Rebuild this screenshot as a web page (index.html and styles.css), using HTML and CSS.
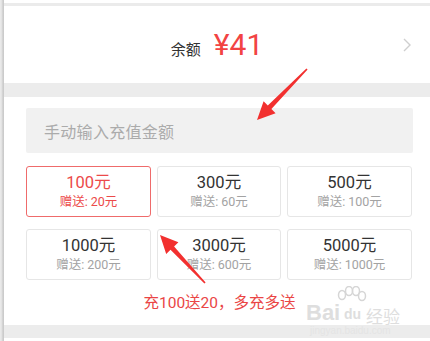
FILE: index.html
```html
<!DOCTYPE html>
<html>
<head>
<meta charset="utf-8">
<link rel="stylesheet" href="styles.css">
</head>
<body>
<div class="frame">
  <div class="edge"></div>
  <div class="main">
    <div class="topgap"></div>
    <div class="topline"></div>
    <div class="header">
      <span class="label">余额</span>
      <span class="amount">¥41</span>
      <svg class="chev" width="8" height="14" viewBox="0 0 8 14"><path d="M1 1 L7 7 L1 13" fill="none" stroke="#cfcfcf" stroke-width="1.4"/></svg>
    </div>
    <div class="band"></div>
    <div class="content">
      <div class="input">手动输入充值金额</div>
      <div class="grid">
        <div class="opt sel"><div class="big">100元</div><div class="small">赠送: 20元</div></div>
        <div class="opt"><div class="big">300元</div><div class="small">赠送: 60元</div></div>
        <div class="opt"><div class="big">500元</div><div class="small">赠送: 100元</div></div>
        <div class="opt"><div class="big">1000元</div><div class="small">赠送: 200元</div></div>
        <div class="opt"><div class="big">3000元</div><div class="small">赠送: 600元</div></div>
        <div class="opt"><div class="big">5000元</div><div class="small">赠送: 1000元</div></div>
      </div>
      <div class="promo">充100送20，多充多送</div>
    </div>
    <div class="band bottom"></div>
  </div>
</div>
<div class="wm">
  <svg class="paw" width="34" height="26" viewBox="0 0 34 26">
    <g fill="none" stroke="#d6d6d6" stroke-width="1.5">
      <ellipse cx="8" cy="9" rx="3.5" ry="4.5"/>
      <ellipse cx="15" cy="5" rx="3.5" ry="4.5"/>
      <ellipse cx="22" cy="5" rx="3.5" ry="4.5"/>
      <ellipse cx="28" cy="10" rx="3.5" ry="4.5"/>
    </g>
  </svg>
  <span class="wm-bai">Bai</span><span class="wm-du">du</span><span class="wm-jy">经验</span>
  <div class="wm-url">jingyan.baidu.com</div>
</div>
<svg class="notes" width="430" height="341" viewBox="0 0 430 341">
  <polygon fill="#f2302f" points="307.6,69.6 271.4,109 275.6,113.2 257,120 263.6,101.2 267.8,105.5 306.4,68.4"/>
  <polygon fill="#f2302f" points="205.6,282.4 174.1,246.4 178.4,242.2 160,235 166.2,254 170.5,249.8 204.4,283.6"/>
</svg>
</body>
</html>
```
FILE: styles.css
```css
html, body {
  margin: 0;
  padding: 0;
  background: #fff;
}
body {
  width: 430px;
  height: 341px;
  overflow: hidden;
  position: relative;
  font-family: Roboto, "Noto Sans CJK SC", sans-serif;
}
.frame {
  display: flex;
  height: 341px;
}
.edge {
  width: 4px;
  background: linear-gradient(to right, #ececec 0%, #e0e0e0 50%, #c4c4c4 80%, #d8d8d8 100%);
}
.main {
  flex: 1;
  display: flex;
  flex-direction: column;
}
.topgap {
  height: 3px;
}
.topline {
  height: 3px;
  background: #ebebeb;
}
.header {
  height: 77px;
  display: flex;
  align-items: baseline;
  justify-content: center;
  position: relative;
  padding-top: 22px;
  box-sizing: border-box;
}
.label {
  font-size: 15px;
  color: #333;
  margin-right: 13px;
  font-family: "Noto Sans CJK SC", sans-serif;
}
.amount {
  font-size: 30px;
  color: #f24343;
  line-height: 34px;
}
.chev {
  position: absolute;
  right: 19px;
  top: 32px;
}
.band {
  height: 14px;
  background: #ececec;
}
.content {
  padding: 11px 17px 0 22px;
  height: 228px;
  box-sizing: border-box;
}
.input {
  height: 45px;
  background: #f1f1f1;
  border-radius: 2px;
  color: #ababab;
  font-size: 16px;
  font-family: "Noto Sans CJK SC", sans-serif;
  display: flex;
  align-items: center;
  padding-left: 18px;
  letter-spacing: 0.3px;
}
.grid {
  margin-top: 13px;
  display: grid;
  grid-template-columns: 125px 124px 125px;
  column-gap: 6px;
  row-gap: 12px;
}
.opt {
  height: 51px;
  box-sizing: border-box;
  border: 1px solid #e6e6e6;
  border-radius: 3px;
  display: flex;
  flex-direction: column;
  align-items: center;
  justify-content: center;
}
.opt.sel {
  border: 1.5px solid #ef6b6b;
}
.big {
  font-size: 16.5px;
  color: #333;
  line-height: 19px;
}
.small {
  font-size: 12.5px;
  color: #a3a3a3;
  line-height: 16px;
  margin-top: 2px;
}
.sel .big, .sel .small {
  color: #ec4a4a;
}
.promo {
  margin-top: 13px;
  text-align: center;
  font-size: 15.5px;
  color: #ea4545;
  line-height: 20px;
}
.band.bottom {
  height: 13px;
}
.wm {
  position: absolute;
  left: 300px;
  top: 286px;
  width: 110px;
  height: 50px;
  color: #dedede;
  font-family: "Liberation Sans", sans-serif;
}
.paw {
  position: absolute;
  left: 34px;
  top: 0;
}
.wm-bai {
  position: absolute;
  left: 6px;
  top: 14px;
  font-size: 22px;
  font-weight: bold;
}
.wm-du {
  position: absolute;
  left: 44px;
  top: 20px;
  font-size: 14px;
  font-weight: bold;
}
.wm-jy {
  position: absolute;
  left: 66px;
  top: 17px;
  font-size: 17px;
  font-family: "Noto Sans CJK SC", sans-serif;
}
.wm-url {
  position: absolute;
  left: 10px;
  top: 39px;
  font-size: 10px;
  color: #e4e4e4;
}
.notes {
  position: absolute;
  left: 0;
  top: 0;
  pointer-events: none;
}
```
